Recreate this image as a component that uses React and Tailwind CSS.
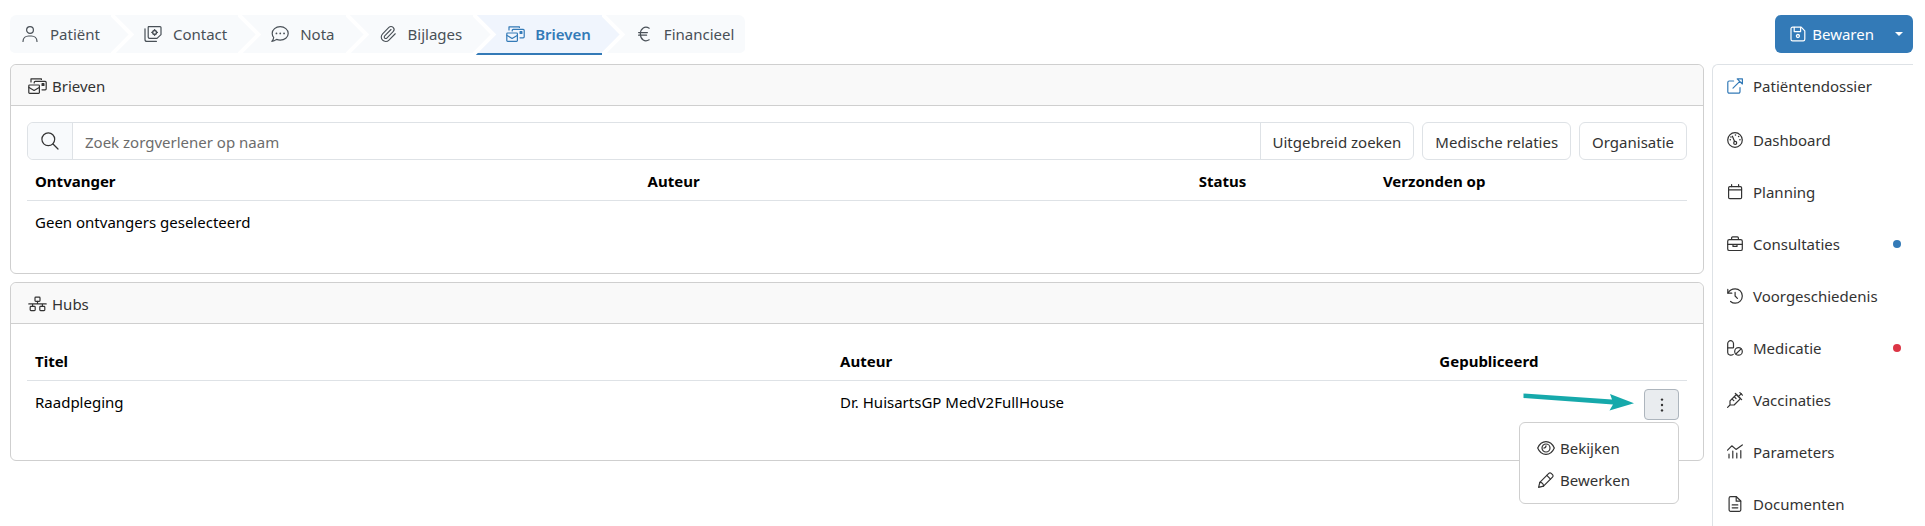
import React from "react";
import { Paperclip } from "lucide-react";

function Icon({ className = "size-4", viewBox = "0 0 16 16", children }) {
  return (
    <svg
      className={className}
      viewBox={viewBox}
      fill="none"
      stroke="currentColor"
      strokeWidth="1.2"
      strokeLinecap="round"
      strokeLinejoin="round"
      aria-hidden="true"
    >
      {children}
    </svg>
  );
}

const UserIcon = () => (
  <Icon>
    <circle cx="8" cy="4" r="3.4" />
    <path d="M1 15.4 C1 12 3.6 10 6.6 10 H9.4 C12.4 10 15 12 15 15.4" />
  </Icon>
);

const CardsIcon = () => (
  <Icon className="h-4 w-[18px]" viewBox="0 0 18 16">
    <path d="M4.6 0.6 H16 A1 1 0 0 1 17 1.6 V8.6 L13 12.4 H5.6 A1.4 1.4 0 0 1 4.2 11 V1.6 A1 1 0 0 1 4.6 0.6 Z" />
    <path d="M1 2.8 V13.4 A2 2 0 0 0 3 15.4 H12.4" />
    <circle cx="10.6" cy="6.4" r="1.9" strokeWidth="1.4" />
    <path d="M10.6 3.6 V4.2 M10.6 8.6 V9.2 M7.8 6.4 H8.4 M12.8 6.4 H13.4" strokeWidth="1.4" />
  </Icon>
);

const ChatIcon = () => (
  <Icon className="h-4 w-[18px]" viewBox="0 0 18 16">
    <path d="M9.2 0.7 C13.6 0.7 17.2 3.6 17.2 7.4 C17.2 11.2 13.6 14.1 9.2 14.1 C7.9 14.1 6.7 13.9 5.6 13.4 C4.2 14.5 2.5 15.3 0.8 15.3 C1.9 14.2 2.6 13 2.7 11.5 C1.8 10.3 1.2 8.9 1.2 7.4 C1.2 3.6 4.8 0.7 9.2 0.7 Z" />
    <path d="M5.4 7.4 H5.5 M9.2 7.4 H9.3 M13 7.4 H13.1" strokeWidth="1.7" />
  </Icon>
);

const ClipIcon = () => <Paperclip className="size-[18px]" strokeWidth={1.5} aria-hidden="true" />;

const LettersIcon = () => (
  <Icon className="h-4 w-[19px]" viewBox="0 0 19 16">
    <path d="M3 4 V0.8 H13.4 V1.4" />
    <path d="M6.2 5 V4.4 A1 1 0 0 1 7.2 3.4 H17.2 A1 1 0 0 1 18.2 4.4 V10.8 A1 1 0 0 1 17.2 11.8 H14" />
    <rect x="0.8" y="7" width="10.6" height="8.3" rx="0.8" />
    <path d="M1 9.4 L6.1 12.4 L11.2 9.4" />
    <rect x="14.1" y="5.7" width="1.8" height="1.8" fill="currentColor" />
  </Icon>
);

const EuroIcon = () => (
  <Icon className="h-4 w-3" viewBox="0 0 12 16">
    <path d="M11.2 2.2 C7 -0.3 2.4 2.2 2.4 8 C2.4 13.8 7 16.3 11.2 13.8" />
    <path d="M0.6 6.6 H9.4 M0.6 9.2 H8.6" />
  </Icon>
);

const HubsIcon = () => (
  <Icon className="h-4 w-[19px]" viewBox="0 0 19 16">
    <path d="M0.8 7.9 H18.2 M9.5 5.4 V7.9 M4.6 7.9 V10.2 M14.4 7.9 V10.2" />
    <rect x="7" y="1.1" width="5" height="4.2" rx="0.8" />
    <rect x="2.2" y="10.4" width="5" height="4.2" rx="0.8" />
    <rect x="11.8" y="10.4" width="5" height="4.2" rx="0.8" />
  </Icon>
);

const SearchIcon = () => (
  <Icon className="size-[18px]" viewBox="0 0 18 18">
    <circle cx="7.3" cy="7.3" r="6.4" />
    <path d="M12 12 L17 17" />
  </Icon>
);

const SaveIcon = () => (
  <Icon>
    <path d="M2.6 1.2 H11.2 L14.8 4.8 V13.2 A1.6 1.6 0 0 1 13.2 14.8 H2.6 A1.6 1.6 0 0 1 1 13.2 V2.8 A1.6 1.6 0 0 1 2.6 1.2 Z" />
    <path d="M4.2 1.4 V5.6 H10.6 V1.4" />
    <circle cx="7.9" cy="10" r="1.5" strokeWidth="1.3" />
  </Icon>
);

const ExternalIcon = () => (
  <Icon>
    <path d="M10.2 0.8 H15.4 V6 Z M12.8 3.4 L6 10.2" />
    <path d="M6.6 3 H2.2 A1.4 1.4 0 0 0 0.8 4.4 V13.8 A1.4 1.4 0 0 0 2.2 15.2 H11.6 A1.4 1.4 0 0 0 13 13.8 V9.6" />
  </Icon>
);

const GaugeIcon = () => (
  <Icon>
    <circle cx="8" cy="8" r="7.3" />
    <path d="M5.4 4.2 L7.6 9.4" />
    <circle cx="8.2" cy="10.9" r="1.5" />
    <path d="M8.4 3.1 H8.5 M11.6 4.6 H11.7 M3.2 7.8 H3.3 M12.9 7.8 H13 M3.9 5 H4" strokeWidth="1.5" />
  </Icon>
);

const CalendarIcon = () => (
  <Icon>
    <rect x="1.6" y="2.6" width="13" height="12" rx="1.2" />
    <path d="M1.6 5.8 H14.6 M4.6 0.6 V2.6 M11.6 0.6 V2.6" />
  </Icon>
);

const BriefcaseIcon = () => (
  <Icon>
    <rect x="0.7" y="3.6" width="14.6" height="10.9" rx="1.6" />
    <path d="M4.6 3.4 V1.9 A1 1 0 0 1 5.6 0.9 H10.4 A1 1 0 0 1 11.4 1.9 V3.4 M0.8 8.4 H15.2 M6 8.4 V10.4 H10 V8.4" />
  </Icon>
);

const HistoryIcon = () => (
  <Icon>
    <path d="M0.8 1.4 V5.2 H4.8" />
    <path d="M1 5 C2.3 2.4 5 0.8 8.2 0.8 C12.2 0.8 15.3 4 15.3 8 C15.3 12 12.2 15.2 8.2 15.2 C6.4 15.2 4.8 14.5 3.6 13.5" />
    <path d="M8.1 4.4 V8 L10.4 10.4" />
  </Icon>
);

const PillsIcon = () => (
  <Icon>
    <path d="M6.2 14.4 C4.2 16 0.7 15 0.7 12.4 V3.6 A2.9 2.9 0 0 1 6.5 3.6 V7.4" />
    <path d="M0.7 7.8 H6.2" />
    <circle cx="11.5" cy="11.4" r="3.8" />
    <path d="M8.9 14 L14.1 8.8" />
  </Icon>
);

const SyringeIcon = () => (
  <Icon>
    <path d="M0.6 15.4 L3 13 M3 13 V8.9 L9.4 2.5 L13.5 6.6 L7.1 13 Z" />
    <path d="M8.3 1.4 L14.6 7.7 M11.6 4.4 L14.4 1.6 M12.9 0.6 L15.4 3.1 M7.4 4.9 L9 6.5 M5.2 7.1 L6.8 8.7" />
  </Icon>
);

const ChartIcon = () => (
  <Icon>
    <path d="M0.6 6.2 L4.8 1.8 L9 5.4 L15.3 0.9" />
    <path d="M2 10.2 V14 M5.8 7 V14 M9.8 9.2 V14 M13.8 6.6 V14" />
  </Icon>
);

const FileIcon = () => (
  <Icon>
    <path d="M3.6 0.7 H9.4 L13.8 5 V13.8 A1.5 1.5 0 0 1 12.3 15.3 H3.6 A1.5 1.5 0 0 1 2.1 13.8 V2.2 A1.5 1.5 0 0 1 3.6 0.7 Z" />
    <path d="M9.2 0.9 V5.2 H13.6 M5.2 8.9 H10.8 M5.2 11.8 H10.8" />
  </Icon>
);

const EyeIcon = () => (
  <Icon className="h-4 w-[18px]" viewBox="0 0 18 16">
    <path d="M0.7 8 C2.4 4 5.4 1.6 9 1.6 C12.6 1.6 15.6 4 17.3 8 C15.6 12 12.6 14.4 9 14.4 C5.4 14.4 2.4 12 0.7 8 Z" />
    <circle cx="9" cy="8" r="4" />
    <path d="M9 5.8 A2.2 2.2 0 0 1 6.8 8" />
  </Icon>
);

const PencilIcon = () => (
  <Icon className="h-4 w-[18px]" viewBox="0 0 18 16">
    <path d="M1.6 15.3 L2.8 10.4 L11.8 1.4 C12.5 0.7 13.5 0.7 14.2 1.4 L15.5 2.7 C16.2 3.4 16.2 4.4 15.5 5.1 L6.5 14.1 Z" />
    <path d="M2.8 10.4 C4.8 10.2 6.7 12.1 6.5 14.1 M9.8 3.4 L13.5 7.1" />
  </Icon>
);

const tabs = [
  { label: "Patiënt", icon: UserIcon },
  { label: "Contact", icon: CardsIcon },
  { label: "Nota", icon: ChatIcon },
  { label: "Bijlages", icon: ClipIcon },
  { label: "Brieven", icon: LettersIcon, active: true },
  { label: "Financieel", icon: EuroIcon },
];

function Tab({ label, icon: TabIcon, active, first, last }) {
  return (
    <a
      href="#"
      aria-current={active ? "step" : undefined}
      className={
        "relative flex h-10 items-center gap-2.5 border-b-2 bg-clip-padding pr-[11px] " +
        (first ? "rounded-l-md pl-2.5 " : "pl-8 ") +
        (last ? "rounded-r-md " : "") +
        (active
          ? "border-[#337ab7] bg-[#f0f5fd] font-semibold text-[#337ab7]"
          : "border-transparent bg-[#f8fafc] text-[#495057]")
      }
    >
      <span className="flex w-5 justify-center">
        <TabIcon />
      </span>
      {label}
      {!last && (
        <svg
          className={
            "absolute top-0 left-full z-10 h-10 w-6 " +
            (active ? "text-[#f0f5fd]" : "text-[#f8fafc]")
          }
          viewBox="0 0 24 40"
          aria-hidden="true"
        >
          <path d="M0 0 L20 19.5 L0 38 Z" fill="currentColor" />
          <path d="M-2 -3 L20.5 19.5 L-2 42" fill="none" stroke="#fff" strokeWidth="4" />
        </svg>
      )}
    </a>
  );
}

function Card({ title, icon: CardIcon, children }) {
  return (
    <section className="rounded-md border border-[#cfcfcf] bg-white">
      <h2 className="flex h-[41px] items-center gap-[5px] rounded-t-md border-b border-[#cfcfcf] bg-[#f9f9f9] px-[17px] pt-0.5 text-[#333]">
        <CardIcon />
        {title}
      </h2>
      <div className="p-4">{children}</div>
    </section>
  );
}

const navItems = [
  { label: "Dashboard", icon: GaugeIcon },
  { label: "Planning", icon: CalendarIcon },
  { label: "Consultaties", icon: BriefcaseIcon, dot: "bg-[#337ab7]" },
  { label: "Voorgeschiedenis", icon: HistoryIcon },
  { label: "Medicatie", icon: PillsIcon, dot: "bg-[#dc3545]" },
  { label: "Vaccinaties", icon: SyringeIcon },
  { label: "Parameters", icon: ChartIcon },
  { label: "Documenten", icon: FileIcon },
];

export default function App() {
  return (
    <div className="bg-white pt-[15px] pr-3 pl-2.5 font-['Noto_Sans',sans-serif] text-[15px] leading-6 text-black">
      <header className="flex items-start justify-between">
        <nav className="flex" aria-label="Stappen">
          {tabs.map((tab, i) => (
            <Tab key={tab.label} {...tab} first={i === 0} last={i === tabs.length - 1} />
          ))}
        </nav>
        <div className="flex h-[38px] rounded-md bg-[#337ab7] text-white">
          <button type="button" className="flex items-center gap-1.5 pr-[11px] pl-[15px]">
            <SaveIcon />
            Bewaren
          </button>
          <button type="button" aria-label="Meer opties" className="flex items-center px-2.5">
            <svg className="h-1 w-2" viewBox="0 0 8 4" fill="currentColor" aria-hidden="true">
              <path d="M0 0 H8 L4 4 Z" />
            </svg>
          </button>
        </div>
      </header>

      <div className="mt-[9px] flex gap-2">
        <main className="flex min-w-0 flex-1 flex-col gap-2">
          <Card title="Brieven" icon={LettersIcon}>
            <div className="flex gap-2 text-[#333]">
              <div className="flex h-[38px] flex-1 rounded-md border border-[#dee2e6]">
                <label
                  htmlFor="zoek"
                  aria-label="Zoek zorgverlener"
                  className="flex w-[45px] items-center justify-center rounded-l-md border-r border-[#dee2e6] bg-[#f8fafc]"
                >
                  <SearchIcon />
                </label>
                <input
                  id="zoek"
                  type="text"
                  placeholder="Zoek zorgverlener op naam"
                  className="min-w-0 flex-1 px-3 pt-0.5 placeholder:text-[#6c6c6c]"
                />
                <button type="button" className="border-l border-[#dee2e6] px-3 pt-0.5">
                  Uitgebreid zoeken
                </button>
              </div>
              <button type="button" className="h-[38px] rounded-md border border-[#dee2e6] px-3 pt-0.5">
                Medische relaties
              </button>
              <button type="button" className="h-[38px] rounded-md border border-[#dee2e6] px-3 pt-0.5">
                Organisatie
              </button>
            </div>
            <table className="mb-4 w-full table-fixed text-left">
              <thead>
                <tr className="border-b border-[#dee2e6]">
                  <th className="w-[36.9%] px-2 pt-[9px] pb-[7px] font-bold">Ontvanger</th>
                  <th className="w-[33.2%] px-2 pt-[9px] pb-[7px] font-bold">Auteur</th>
                  <th className="w-[11.1%] px-2 pt-[9px] pb-[7px] font-bold">Status</th>
                  <th className="px-2 pt-[9px] pb-[7px] font-bold">Verzonden op</th>
                </tr>
              </thead>
              <tbody>
                <tr>
                  <td className="px-2 pt-[9px] pb-[7px]" colSpan={4}>
                    Geen ontvangers geselecteerd
                  </td>
                </tr>
              </tbody>
            </table>
          </Card>

          <Card title="Hubs" icon={HubsIcon}>
            <table className="mb-4 w-full table-fixed text-left">
              <thead>
                <tr className="border-b border-[#dee2e6]">
                  <th className="w-[48.5%] px-2 pt-[9px] pb-[7px] font-bold">Titel</th>
                  <th className="w-[36.1%] px-2 pt-[9px] pb-[7px] font-bold">Auteur</th>
                  <th className="px-2 pt-[9px] pb-[7px] font-bold">Gepubliceerd</th>
                </tr>
              </thead>
              <tbody>
                <tr className="align-top">
                  <td className="px-2 pt-[9px] pb-[7px]">Raadpleging</td>
                  <td className="px-2 pt-[9px] pb-[7px]">Dr. HuisartsGP MedV2FullHouse</td>
                  <td className="p-2">
                    <div className="relative flex justify-end">
                      <svg
                        className="absolute top-1 right-11 h-5 w-28"
                        viewBox="0 0 112 20"
                        aria-hidden="true"
                      >
                        <path
                          d="M0.5 0.5 L89 6.6 L87 1 L111 10.2 L86.5 17.5 L90 11.4 L0.5 5 Z"
                          fill="#16a9ab"
                        />
                      </svg>
                      <button
                        type="button"
                        aria-label="Acties"
                        aria-expanded="true"
                        className="flex h-[31px] w-[35px] items-center justify-center rounded border border-[#adb5bd] bg-[#e9ecef] text-[#333]"
                      >
                        <svg className="h-4 w-1" viewBox="0 0 4 16" fill="currentColor" aria-hidden="true">
                          <circle cx="2" cy="2.6" r="1.2" />
                          <circle cx="2" cy="8" r="1.2" />
                          <circle cx="2" cy="13.4" r="1.2" />
                        </svg>
                      </button>
                      <ul
                        role="menu"
                        className="absolute top-full right-0 z-10 mt-0.5 w-40 rounded-md border border-[#cfcfcf] bg-white py-2 text-[#333]"
                      >
                        <li role="none">
                          <a role="menuitem" href="#" className="flex h-8 items-center gap-[5px] px-[17px] pt-0.5">
                            <EyeIcon />
                            Bekijken
                          </a>
                        </li>
                        <li role="none">
                          <a role="menuitem" href="#" className="flex h-8 items-center gap-[5px] px-[17px] pt-0.5">
                            <PencilIcon />
                            Bewerken
                          </a>
                        </li>
                      </ul>
                    </div>
                  </td>
                </tr>
              </tbody>
            </table>
          </Card>
        </main>

        <aside className="w-[201px] rounded-tl-md border-t border-l border-[#dee2e6] pl-3.5 text-[#333]">
          <a href="#" className="flex h-[49px] items-start gap-2.5 pt-[9px]">
            <span className="flex h-6 items-center text-[#337ab7]">
              <ExternalIcon />
            </span>
            Patiëntendossier
          </a>
          {navItems.map(({ label, icon: ItemIcon, dot }) => (
            <a key={label} href="#" className="flex h-[52px] items-center gap-2.5 pr-3">
              <ItemIcon />
              {label}
              {dot && <span className={"ml-auto size-2 rounded-full " + dot} />}
            </a>
          ))}
        </aside>
      </div>
    </div>
  );
}
